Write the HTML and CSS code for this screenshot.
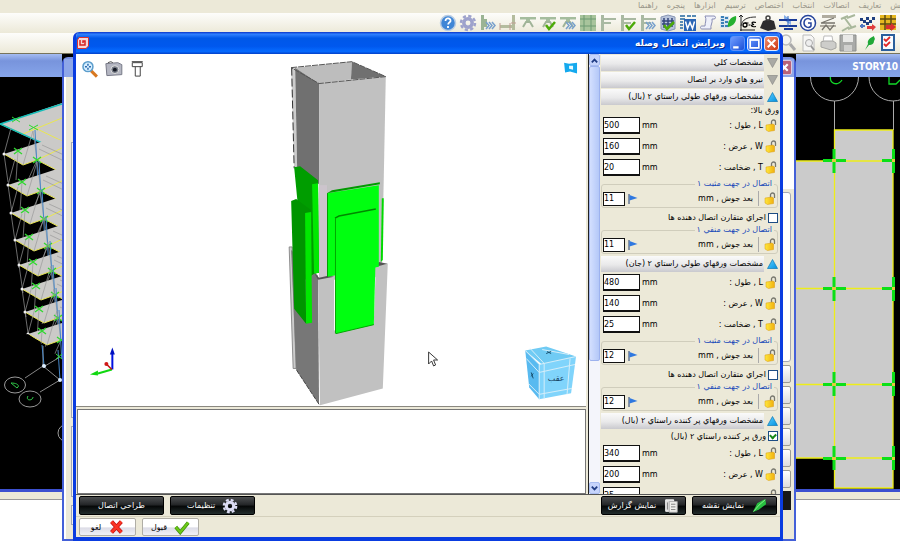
FILE: index.html
```html
<!DOCTYPE html>
<html lang="fa">
<head>
<meta charset="utf-8">
<title>ویرایش اتصال وصله</title>
<link rel="stylesheet" href="styles.css">
</head>
<body>
<svg class="defs" aria-hidden="true">
  <defs>
    <linearGradient id="gold" x1="0" x2="1"><stop offset="0" stop-color="#ffe83c"/><stop offset="1" stop-color="#f0b010"/></linearGradient>
    <linearGradient id="tri" x1="0" y1="0" x2="1" y2="1"><stop offset="0" stop-color="#5fd0ff"/><stop offset="1" stop-color="#0090e0"/></linearGradient>
    <symbol id="lock" viewBox="0 0 12 13"><path d="M6.500 6V3a2 2 0 0 1 4 0V6" fill="none" stroke="#77776e" stroke-width="1.300"/><path d="M1 6l7-1 1.500 1v5.500l-6 1L1 11z" fill="url(#gold)" stroke="#d99a10" stroke-width=".5"/></symbol>
    <symbol id="flag" viewBox="0 0 10 10"><path d="M1 0v10" stroke="#223c70"/><path d="M1.500 1l8 3-8 2.500z" fill="#2f78e0"/></symbol>
    <symbol id="up" viewBox="0 0 11 10"><path d="M5.500 .5l5 9H.5z" fill="url(#tri)" stroke="#0a78b8" stroke-width=".7"/></symbol>
    <symbol id="down" viewBox="0 0 11 10"><path d="M.5 .5h10l-5 9z" fill="#a9a9a4" stroke="#8a8a86" stroke-width=".7"/></symbol>
    <symbol id="arrows" viewBox="0 0 18 18"><path d="M7 8l3 3.500-3 3.500M10 8l3 3.500-3 3.500M13 8l3 3.500-3 3.500" fill="none" stroke="#78a0cc" stroke-width="1.500"/></symbol>
    <symbol id="tick" viewBox="0 0 18 18"><path d="M7 11l3 4 6-7" fill="none" stroke="#4caa08" stroke-width="2.500"/></symbol>
    <symbol id="gear" viewBox="0 0 18 18"><g fill="none"><circle cx="9" cy="9" r="7" stroke-width="2.500" stroke-dasharray="3.200 2.300"/><circle cx="9" cy="9" r="4.200" stroke-width="3.500"/></g></symbol>
    <symbol id="tee" viewBox="0 0 18 18"><path d="M1 3h16v2.500H1zM7 5.500h4v2H7z" fill="#a5bd9e"/><path d="M4 13l3-5h4l3 5" fill="none" stroke="#a0b498" stroke-width="2"/></symbol>
    <symbol id="bracket" viewBox="0 0 18 18"><path d="M2 1h3v16H2zM5 4h12v2H5zM5 8h7v2H5z" fill="#a9b9a2"/></symbol>
    <g id="floor"><path d="M0 0L49-16 62-12V21L33 6 19 11z" fill="#cbcac8"/><path d="M0 0L19 11 33 6 60 20M33 6L60-7" fill="none" stroke="#e9e650"/><path d="M0 0L4 28M0 0L7-26M14-3L12 26M19 11L29-23M33 6L20 35M29-23L33 6M35-5L60 7M38-9L60 1" fill="none" stroke="#999" stroke-width=".7"/><path d="M31-24L34 30" stroke="#4687c8"/><path d="M10-6l8 6m0-6l-8 6M29 3l8 6m0-6l-8 6" stroke="#30d830" stroke-width="1.300"/><circle cx="0" cy="0" r="1.500" fill="#eee"/></g>
  </defs>
</svg>

<div class="app">
  <nav class="menu" dir="rtl">
    <a href="#">نمايش</a><a href="#">تعاريف</a><a href="#">اتصالات</a><a href="#">انتخاب</a><a href="#">اختصاص</a><a href="#">ترسيم</a><a href="#">ابزارها</a><a href="#">پنجره</a><a href="#">راهنما</a>
  </nav>
  <div class="tools">
    <svg viewBox="0 0 18 18"><circle cx="9" cy="9" r="7.500" fill="#3f86d6" stroke="#b9cde4" stroke-width="1.500"/><path d="M6.500 7c0-4 5.500-3 5 0-.3 1.500-2.300 1.500-2.300 3.500M9 12v2" fill="none" stroke="#fff" stroke-width="1.800"/></svg>
    <svg viewBox="0 0 18 18" stroke="#9ea2cc"><use href="#gear"/></svg>
    <svg viewBox="0 0 18 18"><path d="M2 1h3v15H2zM5 5h3v8H5z" fill="#9bb494"/><use href="#arrows"/></svg>
    <svg viewBox="0 0 18 18"><path d="M13 1h3v15h-3zM1 11h12v3H1z" fill="#b4bc9e"/><path d="M1 9v7m10-7v7m1-7h5" stroke="#c09f94" fill="none"/></svg>
    <svg viewBox="0 0 18 18"><use href="#tee"/></svg>
    <svg viewBox="0 0 18 18"><use href="#tee"/><use href="#tick"/></svg>
    <svg viewBox="0 0 18 18"><use href="#tee"/><use href="#arrows"/></svg>
    <svg viewBox="0 0 18 18"><path d="M1 1h16v16H1z" fill="#a8c49c"/><path d="M1 5h16M1 12h16M5 1v16M12 1v16" stroke="#6d9a72"/></svg>
    <svg viewBox="0 0 18 18"><use href="#bracket"/></svg>
    <svg viewBox="0 0 18 18"><use href="#bracket"/><use href="#tick"/></svg>
    <svg viewBox="0 0 18 18"><use href="#bracket"/><use href="#arrows"/></svg>
    <svg viewBox="0 0 18 18"><path d="M2 3l7-2 7 2v12l-7 2-7-2z" fill="#b8c4dc" stroke="#8896b4"/><path d="M5 4v10M9 4v11M13 4v9M3 7h12M3 10h12" stroke="#34477c" stroke-width="1.500"/><path d="M5 11l3 4 7-7" fill="none" stroke="#4caa08" stroke-width="2.500"/></svg>
    <svg viewBox="0 0 18 18"><path d="M1 2h5M1 5h5M1 8h3M1 11h3M1 14h3M8 2h4M13 2h4" stroke="#588bb4" stroke-width="2"/><path d="M5 5h12v12H5z" fill="#2a66b4"/><path d="M6.500 7.500l2 7 2.500-6 2.500 6 2-7" fill="none" stroke="#fff" stroke-width="1.500"/></svg>
    <svg viewBox="0 0 18 18"><path d="M6 2h9c2 0 2 3 0 3h-2c1 4-2 6-1 10H3c-2 0-2-3 0-3h3c0-4 2-6 0-10z" fill="#eef0fa" stroke="#8a8eb4"/></svg>
    <svg viewBox="0 0 18 18"><path d="M1 2h9v12H1z" fill="#d7e4f0"/><path d="M2 3h3M2 6h3M2 9h3M2 12h3M6 4h3M6 8h3M6 12h3" stroke="#3b80b8" stroke-width="2"/><path d="M9 13c-1-6 3-10 8-11 1 5-2 10-8 11z" fill="#25b030"/></svg>
    <svg viewBox="0 0 18 18"><path d="M2 17V2M0 3l2-2 2 2M1 16h15" fill="none" stroke="#222"/><path d="M2 12c1-7 7-9 15-9" fill="none" stroke="#333"/><circle cx="6" cy="11" r="2" fill="none" stroke="#000" stroke-width="1.300"/><path d="M6 9h3.500M9.500 11h2M17 8.500c-5-1-5 1-2 2-4 0-3 3 2 2" fill="none" stroke="#000" stroke-width="1.200"/></svg>
    <svg viewBox="0 0 18 18"><path d="M4 7l3-1h5l3 1 2 8-8 2-8-3z" fill="#2c2c2e"/><circle cx="9" cy="4" r="2" fill="none" stroke="#444" stroke-width="1.500"/></svg>
    <svg viewBox="0 0 18 18"><path d="M5 1l7 5v5L5 6z" fill="#86aee8"/><path d="M0 6h18M0 12h18M5 15h9" stroke="#1b3c98" stroke-width="2"/><path d="M9 2v11" stroke="#2c64c0"/></svg>
    <svg viewBox="0 0 18 18"><circle cx="9" cy="9" r="7.500" fill="#fff" stroke="#27459c" stroke-width="1.500"/><path d="M12 6c-3-3-7-1-7 3s5 6 7 3V9H9" fill="none" stroke="#27459c" stroke-width="1.500"/></svg>
    <svg viewBox="0 0 18 18"><path d="M3 1h14v3H3zM1 11h16v2H1z" fill="#b0aca0"/><path d="M2 9l13-5M3 16l4-5 4 5 4-5M2 9h14" fill="none" stroke="#77746c" stroke-width="1.300"/></svg>
    <svg viewBox="0 0 18 18"><path d="M2 5l7-3M9 15l8-3M5 3l8 11M16 1l-8 3M3 17l7-4" stroke="#a9b89c" stroke-width="2"/></svg>
    <svg viewBox="0 0 18 18"><path d="M1 4h3v3H1zM4 6h3v3H4zM7 3h3v3H7zM10 6h3v3h-3zM13 3h3v3h-3zM7 8h3v3H7z" fill="#1f3f80"/><path d="M1 12h5M3 10v4" stroke="#5078c0" stroke-width="2"/><path d="M8 12h5v-2l4 3-4 4v-2H8z" fill="#e03c3c"/></svg>
    <svg viewBox="0 0 18 18"><path d="M1 1h16v15H1z" fill="#e6b820"/><path d="M1 5h16M1 10h16M6 1v15M12 1v15" stroke="#5c4a10" stroke-width="1.500"/><path d="M7 11h5V9l5 4-5 4v-2H7z" fill="#d83030"/></svg>
  </div>
  <div class="tools file-tools">
    <svg viewBox="0 0 18 18"><circle cx="7" cy="6" r="5" fill="#f4f4f0" stroke="#bbb" stroke-width="1.500"/><path d="M11 10l5 6" stroke="#aaa" stroke-width="3"/></svg>
    <svg viewBox="0 0 18 18"><path d="M4 1h8l3 3v13H4z" fill="#f7f7f5" stroke="#bbb"/><circle cx="10" cy="9" r="3.500" fill="#eee" stroke="#aaa"/><path d="M12 12l3 4" stroke="#999" stroke-width="2"/></svg>
    <svg viewBox="0 0 18 18"><path d="M5 2h8l1 6H4z" fill="#fff" stroke="#bbb"/><path d="M2 8l3-1h9l3 2v5l-5 2-10-3z" fill="#cdcdca" stroke="#a5a5a2"/></svg>
    <svg viewBox="0 0 18 18"><path d="M1 1h16v16H1z" fill="#a9aaa8" stroke="#8d8f8d"/><path d="M4 1h10v7H4z" fill="#e9e9e7"/><path d="M5 11h8v6H5z" fill="#d0d0ce"/></svg>
    <svg viewBox="0 0 18 18"><path d="M6 16l3-6c-1-4 2-6 6-8 0 2 2 2 0 5 0 4-4 4-5 4z" fill="#20a838"/></svg>
    <svg viewBox="0 0 18 18"><path d="M3 1h12v15H3z" fill="#f8fcff" stroke="#2b5f9c" stroke-width="2"/><path d="M5 5l2 2 4-4M5 10l2 2 4-4" fill="none" stroke="#e02828" stroke-width="1.800"/></svg>
  </div>

  <main class="mdi">
    <section class="child child-left">
      <div class="child-title"></div>
      <svg class="canvas" viewBox="0 77 62 412" preserveAspectRatio="xMinYMin slice">
        <path d="M0 124L62 103V152L30 138 23 135z" fill="#cbcac8"/>
        <path d="M0 124L23 134 62 118M33 127L62 141" fill="none" stroke="#e9e650"/>
        <path d="M0 124L62 104M0 124L62 152" stroke="#12bdb8" stroke-width="1.500"/>
        <path d="M12 117l8 5m0-5l-8 5M29 125l9 5m0-5l-9 5" stroke="#30d830"/>
        <use href="#floor" x="4" y="154"/><use href="#floor" x="8" y="185"/><use href="#floor" x="11" y="213"/><use href="#floor" x="15" y="240"/><use href="#floor" x="19" y="265"/><use href="#floor" x="22" y="289"/><use href="#floor" x="25" y="312"/><use href="#floor" x="28" y="334"/>
        <path d="M0 365H62V489H0z" fill="#000"/><path d="M28 334L0 340V370H62V359z" fill="#000"/>
        <path d="M43 346V366L60 380M43 366L25 378M60 380L40 392M45 366L60 357" fill="none" stroke="#aaa" stroke-width=".8"/>
        <path d="M42 345l2 20M58 350l2 30" stroke="#4687c8"/>
        <path d="M56 354l6 5m0-5l-6 5" stroke="#30d830"/>
        <circle cx="44" cy="366" r="2" fill="#def"/><circle cx="60" cy="380" r="2" fill="#def"/>
        <g fill="none" stroke="#999"><ellipse cx="15" cy="385" rx="10.500" ry="8"/><ellipse cx="30" cy="399" rx="11" ry="8"/><ellipse cx="68" cy="433" rx="10" ry="9"/></g>
        <path d="M11 383l6 5c3-2 1-5-6-5zM28 396c-3 5 5 5 5 1" fill="none" stroke="#30c848"/>
      </svg>
    </section>
    <section class="child child-right">
      <div class="child-title">STORY10</div>
      <svg class="canvas" viewBox="796 77 104 412" preserveAspectRatio="xMinYMin slice">
        <g fill="none" stroke="#aaa"><circle cx="834.500" cy="77" r="24"/><circle cx="893" cy="77" r="24"/><path d="M834.500 101V130M893.500 101V130"/></g>
        <path d="M831 74c-3 11 7 12 11 6M889 74V84h7l4-4" fill="none" stroke="#12d828" stroke-width="1.300"/>
        <path d="M796 161H834V130H893V488H834V458H796z" fill="#cbcbcb"/>
        <path d="M796 161H893M796 288.500H893M796 384.500H893M796 458H893M834.500 130H893V488H834.500z" fill="none" stroke="#eeee18" stroke-width="1.300"/>
        <path d="M834 149v24M834 277v24M834 372v24M834 446v24M893.500 149v24M893.500 277v24M893.500 372v24M893.500 446v24" stroke="#0be018" stroke-width="3"/>
        <path d="M823 160.500h23M823 288.500h23M823 384.500h23M823 458.500h23M882 160.500h11M882 288.500h11M882 384.500h11M882 458.500h11" stroke="#0be018" stroke-width="3"/>
        <path d="M832 160.500h4M832 288.500h4M832 384.500h4M832 458.500h4M892 160.500h3M892 288.500h3M892 384.500h3M892 458.500h3" stroke="#e8c840" stroke-width="3"/>
      </svg>
    </section>
  </main>
  <div class="status"></div>
  <div class="sheet"></div>

  <section class="back-dialog">
    <div class="back-title"><button type="button" aria-label="Close"><svg viewBox="0 0 12 12"><path d="M3 3l6 6M9 3L3 9" stroke="#fff" stroke-width="2"/></svg></button></div>
    <div class="back-body">
      <div class="edge edge-left"><i></i><i></i><i></i></div>
      <div class="edge edge-right"><b></b><u></u><i></i><i></i><i></i><i></i><i></i><i></i><s></s></div>
    </div>
  </section>

  <section class="dialog">
    <header class="titlebar">
      <svg class="logo" viewBox="0 0 12 12"><path d="M2 .5h9.500V9L9 11.500H.5V3z" fill="#f6d8d8" stroke="#dc3030"/><path d="M3 3v5h5V4H6v2" fill="none" stroke="#d82020" stroke-width="1.500"/></svg>
      <h1>ویرایش اتصال وصله</h1>
      <div class="winbtns">
        <button type="button" class="min" aria-label="Minimize"><svg viewBox="0 0 12 12"><path d="M2 9.500h5" stroke="#fff" stroke-width="2"/></svg></button>
        <button type="button" aria-label="Maximize"><svg viewBox="0 0 12 12"><path d="M2 2.500h8v7.500H2z" fill="none" stroke="#fff" stroke-width="1.500"/><path d="M2 2.500h8" stroke="#fff" stroke-width="2"/></svg></button>
        <button type="button" class="close" aria-label="Close"><svg viewBox="0 0 12 12"><path d="M2.500 2.500l7 7M9.500 2.500l-7 7" stroke="#fff" stroke-width="1.800"/></svg></button>
      </div>
    </header>
    <div class="work">
      <div class="views">
        <svg class="scene" viewBox="76 54 512 352" preserveAspectRatio="xMidYMid meet">
          <g stroke-width="1.500"><path d="M91 70l6 6" stroke="#d87820" stroke-width="3"/><circle cx="88" cy="66" r="5" fill="#d8efff" stroke="#5b9dcc"/><path d="M85 66h6M88 63v6" stroke="#2a68ac" stroke-dasharray="2 2"/></g>
          <g><path d="M106 63l12-1 4 2v10l-15 1z" fill="#b4b6c2" stroke="#777988"/><path d="M108 62l3-1 2 1" stroke="#555" fill="none"/><circle cx="115" cy="69" r="4" fill="#777c88" stroke="#ddd"/><circle cx="115" cy="69" r="2" fill="#161a24"/></g>
          <path d="M132.500 62h10v4h-10zM135.500 66v9.500h5V66M132 61h11" fill="#fff" stroke="#444"/>
          <path d="M566 62l5 1 8-1v11l-7-2-5 1z" fill="#14a9ee"/><path d="M571 65l4 0v4l-4-1z" fill="#e6faff"/>
          <path d="M292 67L296 67 298 168H295z" fill="#ccc"/><path d="M292.500 67L295 168" stroke="#333" stroke-dasharray="8 3"/>
          <path d="M296 67L353 61 352 79 320 83z" fill="#bdbdbd"/><path d="M353 61L387 76 352 79z" fill="#707070"/>
          <path d="M296 67L320 83V184L298 168z" fill="#707070"/>
          <path d="M320 83L387 76 383 277 320 281z" fill="#c1c1c1"/>
          <path d="M292 67L353 61 387 76 320 83z" fill="none" stroke="#555" stroke-dasharray="6 1"/>
          <path d="M290 247h3l4 122h-3z" fill="#ccc" stroke="#777" stroke-width=".8"/>
          <path d="M292 250L319 276 320 405 297 370z" fill="#777"/>
          <path d="M295 167L301 166 319 180 320 273 315 274 306 280z" fill="#009d00"/><path d="M313 184l6-1 1 90-5 1z" fill="#00e800"/>
          <path d="M320 185h8v95h-8z" fill="#ccc4cc"/>
          <path d="M319 280L335 277V331L375 323 377 267 389 264 384 389 321 406z" fill="#c1c1c1"/>
          <path d="M315 273l5 5 9-2 6 1-16 3z" fill="#555"/><path d="M380 262l9 2-12 3z" fill="#555"/>
          <path d="M292 201L297 199 312 210V213L306 214 307 324 295 309z" fill="#009400"/><path d="M306 213l6-1 1 111-6 1z" fill="#00e800"/>
          <path d="M383 198h2l-1 62-2 2z" fill="#00da00"/>
          <path d="M328 193L380 185V267L329 277z" fill="#00ff10"/><path d="M328 193L333 190 381 182V184z" fill="#009a00"/><path d="M328.500 193v84" stroke="#00a000"/>
          <path d="M336 218L378 211 375 325 337 334z" fill="#00ff10"/><path d="M336 218L340 216 377 209" fill="none" stroke="#008800" stroke-width="1.500"/><path d="M336.500 218v116" stroke="#00a800"/><path d="M337 334L375 325" stroke="#00a800"/>
          <path d="M320 405L297 370" stroke="#444" stroke-dasharray="5 1"/>
          <path d="M112.500 370V352" stroke="#0010e0" stroke-width="2"/><path d="M110 355l2.500-7 2.500 7z" fill="#0010c0"/><path d="M112 370l-14 4" stroke="#10d810" stroke-width="2"/><path d="M90 375l8-4v5z" fill="#10d810"/><path d="M112 370l-5-5" stroke="#c01010" stroke-width="1.500"/><circle cx="106.500" cy="364.500" r="2" fill="#d01818"/>
          <path d="M430 352.500v12l3-3 2 5 2-1-2-5h4z" fill="#fff" stroke="#222" stroke-width=".9"/>
          <path d="M527 351L548 347 578 357 545 366z" fill="#70cbf4"/><path d="M527 351L541 365 541 400 531 388z" fill="#58baf0"/><path d="M541 365L578 357 573 394 541 400z" fill="#80d4fb"/>
          <path d="M527 351L541 365 578 357M541 365V400M532 349L546 364V399M571 355L544 350M528 359L541 373 577 365M572 359L569 395M530 384l11 11 33-6" fill="none" stroke="#d5eef9"/>
          <text class="cube-text" x="558" y="382" text-anchor="middle">عقب</text><path d="M548 354l5-2m-4 0l4 2M533 373l2 6m0-5l-2 3" stroke="#185070"/>
        </svg>
        <div class="log"></div>
      </div>
      <div class="scroll">
        <button type="button" aria-label="Scroll up"><svg viewBox="0 0 10 10"><path d="M2 7l3-3 3 3" fill="none" stroke="#203c84" stroke-width="2"/></svg></button>
        <div class="track"><span></span></div>
        <button type="button" aria-label="Scroll down"><svg viewBox="0 0 10 10"><path d="M2 3l3 3 3-3" fill="none" stroke="#203c84" stroke-width="2"/></svg></button>
      </div>
      <form class="props">
        <h2><span dir="rtl">مشخصات كلي</span><svg><use href="#down"/></svg></h2>
        <h2><span dir="rtl">نيرو هاي وارد بر اتصال</span><svg><use href="#down"/></svg></h2>
        <h2><span dir="rtl">مشخصات ورقهاي طولي راستاي ٢ (بال)</span><svg><use href="#up"/></svg></h2>
        <p dir="rtl">ورق بالا:</p>
        <div class="field"><input id="l1" value="500"><span>mm</span><label for="l1" dir="rtl">L , طول :</label><svg><use href="#lock"/></svg></div>
        <div class="field"><input id="w1" value="160"><span>mm</span><label for="w1" dir="rtl">W , عرض :</label><svg><use href="#lock"/></svg></div>
        <div class="field"><input id="t1" value="20"><span>mm</span><label for="t1" dir="rtl">T , ضخامت :</label><svg><use href="#lock"/></svg></div>
        <fieldset dir="rtl"><legend>اتصال در جهت مثبت ١</legend><div class="weld" dir="ltr"><input id="a1" value="11"><svg class="flag"><use href="#flag"/></svg><label for="a1" dir="rtl">بعد جوش , mm</label><svg class="lock"><use href="#lock"/></svg></div></fieldset>
        <div class="check" dir="rtl"><input type="checkbox" id="c1"><label for="c1">اجراي متقارن اتصال دهنده ها</label></div>
        <fieldset dir="rtl"><legend>اتصال در جهت منفي ١</legend><div class="weld" dir="ltr"><input id="a2" value="11"><svg class="flag"><use href="#flag"/></svg><label for="a2" dir="rtl">بعد جوش , mm</label><svg class="lock"><use href="#lock"/></svg></div></fieldset>
        <h2><span dir="rtl">مشخصات ورقهاي طولي راستاي ٢ (جان)</span><svg><use href="#up"/></svg></h2>
        <div class="field"><input id="l2" value="480"><span>mm</span><label for="l2" dir="rtl">L , طول :</label><svg><use href="#lock"/></svg></div>
        <div class="field"><input id="w2" value="140"><span>mm</span><label for="w2" dir="rtl">W , عرض :</label><svg><use href="#lock"/></svg></div>
        <div class="field"><input id="t2" value="25"><span>mm</span><label for="t2" dir="rtl">T , ضخامت :</label><svg><use href="#lock"/></svg></div>
        <fieldset dir="rtl"><legend>اتصال در جهت مثبت ١</legend><div class="weld" dir="ltr"><input id="a3" value="12"><svg class="flag"><use href="#flag"/></svg><label for="a3" dir="rtl">بعد جوش , mm</label><svg class="lock"><use href="#lock"/></svg></div></fieldset>
        <div class="check" dir="rtl"><input type="checkbox" id="c2"><label for="c2">اجراي متقارن اتصال دهنده ها</label></div>
        <fieldset dir="rtl"><legend>اتصال در جهت منفي ١</legend><div class="weld" dir="ltr"><input id="a4" value="12"><svg class="flag"><use href="#flag"/></svg><label for="a4" dir="rtl">بعد جوش , mm</label><svg class="lock"><use href="#lock"/></svg></div></fieldset>
        <h2><span dir="rtl">مشخصات ورقهاي پر كننده راستاي ٢ (بال)</span><svg><use href="#up"/></svg></h2>
        <div class="check" dir="rtl"><input type="checkbox" id="c3" checked><label for="c3">ورق پر كننده راستاي ٢ (بال)</label></div>
        <div class="field"><input id="l3" value="340"><span>mm</span><label for="l3" dir="rtl">L , طول :</label><svg><use href="#lock"/></svg></div>
        <div class="field"><input id="w3" value="200"><span>mm</span><label for="w3" dir="rtl">W , عرض :</label><svg><use href="#lock"/></svg></div>
        <div class="field"><input id="t3" value="25" aria-label="T"><svg class="end"><use href="#lock"/></svg></div>
      </form>
    </div>
    <div class="actions">
      <button type="button" class="dark"><span>طراحي اتصال</span></button>
      <button type="button" class="dark"><span>تنظيمات</span><svg viewBox="0 0 18 18" stroke="#dcdcf4"><use href="#gear"/></svg></button>
      <i class="spacer"></i>
      <button type="button" class="dark"><span>نمايش گزارش</span><svg viewBox="0 0 18 18"><path d="M3 2h9v13H3z" fill="#ddd" stroke="#fff"/><path d="M7 4h9v12H7z" fill="#f0f0ec" stroke="#aaa"/><path d="M9 7h5M9 10h5M9 13h5M5 5v8" stroke="#777"/></svg></button>
      <button type="button" class="dark"><span>نمايش نقشه</span><svg viewBox="0 0 18 18"><path d="M2 16l5-10 9-5 1 6-8 6z" fill="#28c040"/><path d="M3 15l6-7 7-6" stroke="#90f090" fill="none"/></svg></button>
    </div>
    <div class="actions confirm">
      <button type="button" class="light"><span>لغو</span><svg viewBox="0 0 18 18"><path d="M4 3l11 12M15 3L4 15" stroke="#c01010" stroke-width="4.500"/><path d="M4 3l11 12M15 3L4 15" stroke="#fa3424" stroke-width="3"/></svg></button>
      <button type="button" class="light"><span>قبول</span><svg viewBox="0 0 18 18"><path d="M2 9l5 6 9-11" fill="none" stroke="#3c8c08" stroke-width="4"/><path d="M2 9l5 6 9-11" fill="none" stroke="#6cc818" stroke-width="2.500"/></svg></button>
    </div>
  </section>
</div>
</body>
</html>
```

FILE: styles.css
```css
* { box-sizing: border-box; }
body { margin: 0; font-family: "DejaVu Sans", sans-serif; font-size: 8px; color: #000; }
button, input { font: inherit; color: inherit; margin: 0; padding: 0; }
.defs { position: absolute; width: 0; height: 0; }
.app { position: relative; height: 100vh; display: flex; flex-direction: column; overflow: hidden; background: #ece9d8; }

.menu { display: flex; gap: 9px; height: 13px; margin-right: -12px; line-height: 12px; background: #ece9d8; }
.menu a { color: #99968a; text-decoration: none; }
.tools { display: flex; justify-content: flex-end; align-items: center; gap: 2px; height: 20px; padding-right: 3px; background: linear-gradient(#fdfdfb, #ece9d8); }
.tools svg { width: 18px; height: 18px; }
.file-tools { height: 21px; border-bottom: 1px solid #77745c; }

.mdi { flex: 1; min-height: 0; display: flex; justify-content: space-between; background: #000; border-bottom: 3px solid #3c50d0; }
.child { display: flex; flex-direction: column; min-height: 0; }
.child-left { width: 62px; }
.child-right { width: 104px; }
.child-title { height: 23px; flex: none; padding-right: 2px; font: bold 10px/25px "DejaVu Sans Condensed", "DejaVu Sans", sans-serif; text-align: right; color: #fff; background: linear-gradient(#a5bcf2, #7894dc 30%, #86a5ea); }
.canvas { flex: 1; min-height: 0; width: 100%; }
.status { height: 8px; border-bottom: 1px solid #999; background: #ece9d8; }
.sheet { height: 41px; background: #fff; }

.back-dialog { position: absolute; inset: 57px 104px 0 62px; display: flex; flex-direction: column; border: 2px solid #4460d8; border-top-color: #7890e0; border-radius: 6px 6px 0 0; background: #ece9d8; }
.back-title { display: flex; justify-content: flex-end; height: 18px; padding: 1px 2px; background: #8ea6e8; }
.back-title button { width: 15px; height: 15px; border: 1px solid #dcc8e0; border-radius: 2px; background: #b8627a; }
.back-body { flex: 1; display: flex; justify-content: space-between; }
.edge { display: flex; flex-direction: column; }
.edge-left { width: 12px; padding: 65px 0 14px 5px; gap: 8px; border-left: 2px solid #fff; }
.edge-left i { flex: 1; border: 1px solid #a5a8b4; background: #f3f2ec; }
.edge-left i:first-child { flex: 4; }
.edge-left i:last-child { flex: none; height: 20px; }
.edge-right { width: 14px; padding: 0 3px 0 0; gap: 3px; }
.edge-right b { height: 112px; margin-right: -3px; background: #fff; }
.edge-right u { height: 170px; border: 1px solid #a5a8b4; border-radius: 3px; background: #fff; }
.edge-right i { height: 18px; border: 1px solid #9a9a94; border-radius: 2px; background: linear-gradient(#fff, #ddd); }
.edge-right s { height: 19px; background: #181818; }

.dialog { position: absolute; inset: 32px 117px 0 73px; display: flex; flex-direction: column; border: solid #0a3ce0; border-width: 0 3px 4px; border-radius: 6px 6px 0 0; background: #ece9d8; overflow: hidden; }
.titlebar { display: flex; align-items: center; height: 22px; flex: none; margin: 0 -3px; padding: 0 4px; gap: 5px; color: #fff; background: linear-gradient(#0a34c8, #2f80ff 10%, #0058e8 28%, #0058ee 65%, #066bff 88%, #0440c8); }
.logo { width: 12px; height: 12px; }
h1 { flex: 1; margin: 0; font-size: 9px; line-height: 20px; text-align: right; text-shadow: 1px 1px #0a2888; }
.winbtns { display: flex; gap: 2px; }
.winbtns button { width: 15px; height: 15px; border: 1px solid #dfe8ff; border-radius: 3px; background: linear-gradient(135deg, #6e9cff, #1c50d8); }
.winbtns .min { border-color: #5c90f8; }
.winbtns .close { background: linear-gradient(135deg, #f09070, #cc3610); }
button svg { display: block; }

.work { flex: 1; min-height: 0; display: flex; border-bottom: 1px solid #555; }
.views { flex: 1; min-width: 0; display: flex; flex-direction: column; }
.scene { flex: 1; min-height: 0; width: 100%; background: #fff; border-bottom: 1px solid #8a8880; }
.cube-text { font-size: 8px; fill: #164060; }
.log { height: 85px; margin: 2px 0 0 1px; border: 1px solid #777; background: #fff; }
.scroll { width: 12px; display: flex; flex-direction: column; margin-left: 2px; border-left: 1px solid #222; background: #f4f5fb; }
.scroll button { width: 11px; height: 12px; border: 1px solid #a8bcf0; border-radius: 2px; background: #c6d4fc; }
.track { flex: 1; }
.track span { display: block; height: 71%; border: 1px solid #9db2ee; border-radius: 2px; background: linear-gradient(90deg, #d3dffe, #b4c8f8); }

.props { width: 180px; padding-left: 1px; overflow: hidden; }
.props h2 { display: flex; align-items: center; justify-content: flex-end; gap: 3px; height: 17px; margin: 0; padding-right: 2px; font-size: 8px; font-weight: normal; line-height: 16px; white-space: nowrap; }
.props h2 span { flex: 1; padding-right: 1px; height: 16px; background: linear-gradient(#fafafa, #e9e9ea 55%, #c9c9ce); }
.props h2 svg { flex: none; width: 11px; height: 10px; }
.props fieldset + h2 { margin-top: 1px; }
.props p { height: 10px; margin: 0; padding-right: 1px; line-height: 12px; }
.field { display: flex; align-items: center; height: 21px; padding: 0 3px 0 2px; }
.field input { width: 37px; height: 17px; border: 2px solid #111; border-width: 1px 1px 2px 1px; background: #fff; }
.field span { padding-left: 2px; }
.field label { flex: 1; padding-right: 2px; }
.field svg, .lock { width: 12px; height: 13px; }
.field .end { margin-left: auto; }
fieldset { min-width: 0; height: 30px; margin: 0 2px 0 0; padding: 0; border: 1px solid #d0cdbc; border-radius: 3px; }
legend { margin-right: 3px; padding: 0 2px; line-height: 12px; color: #1648b8; }
.weld { display: flex; align-items: center; height: 17px; padding: 0 1px; }
.weld input { width: 22px; height: 14px; border: 1px solid #111; background: #fff; }
.flag { width: 10px; height: 10px; margin-left: 3px; }
.weld label { flex: 1; margin-right: 5px; padding-right: 5px; border-right: 1px solid #aaa; line-height: 15px; }
.check { display: flex; align-items: center; gap: 2px; height: 16px; padding-top: 3px; padding-right: 2px; white-space: nowrap; }
h2 + .check { height: 14px; padding-top: 0; }
.check input { display: flex; appearance: none; width: 10px; height: 10px; border: 1px solid #1c4c84; background: #fff; }
.check input:checked::before { content: ""; width: 6px; height: 3px; margin: 1px; border: solid #188818; border-width: 0 0 2px 2px; transform: rotate(-45deg); }

.actions { display: flex; align-items: center; gap: 6px; height: 22px; flex: none; padding: 0 3px; border-bottom: 1px solid #d4d0bc; }
.confirm { height: 20px; border: 0; }
.spacer { flex: 1; }
.actions button { display: flex; align-items: center; justify-content: center; gap: 7px; white-space: nowrap; }
.actions svg { width: 16px; height: 16px; }
.dark { width: 85px; height: 19px; border: 1px solid #000; border-radius: 2px; color: #fff; background: linear-gradient(#4c4e50, #242628 45%, #060808 55%, #222c2c); }
.light { width: 57px; height: 18px; border: 1px solid #b0aea6; border-radius: 2px; background: linear-gradient(#fff 50%, #dcdce6 55%, #f0f0f6); }
```
